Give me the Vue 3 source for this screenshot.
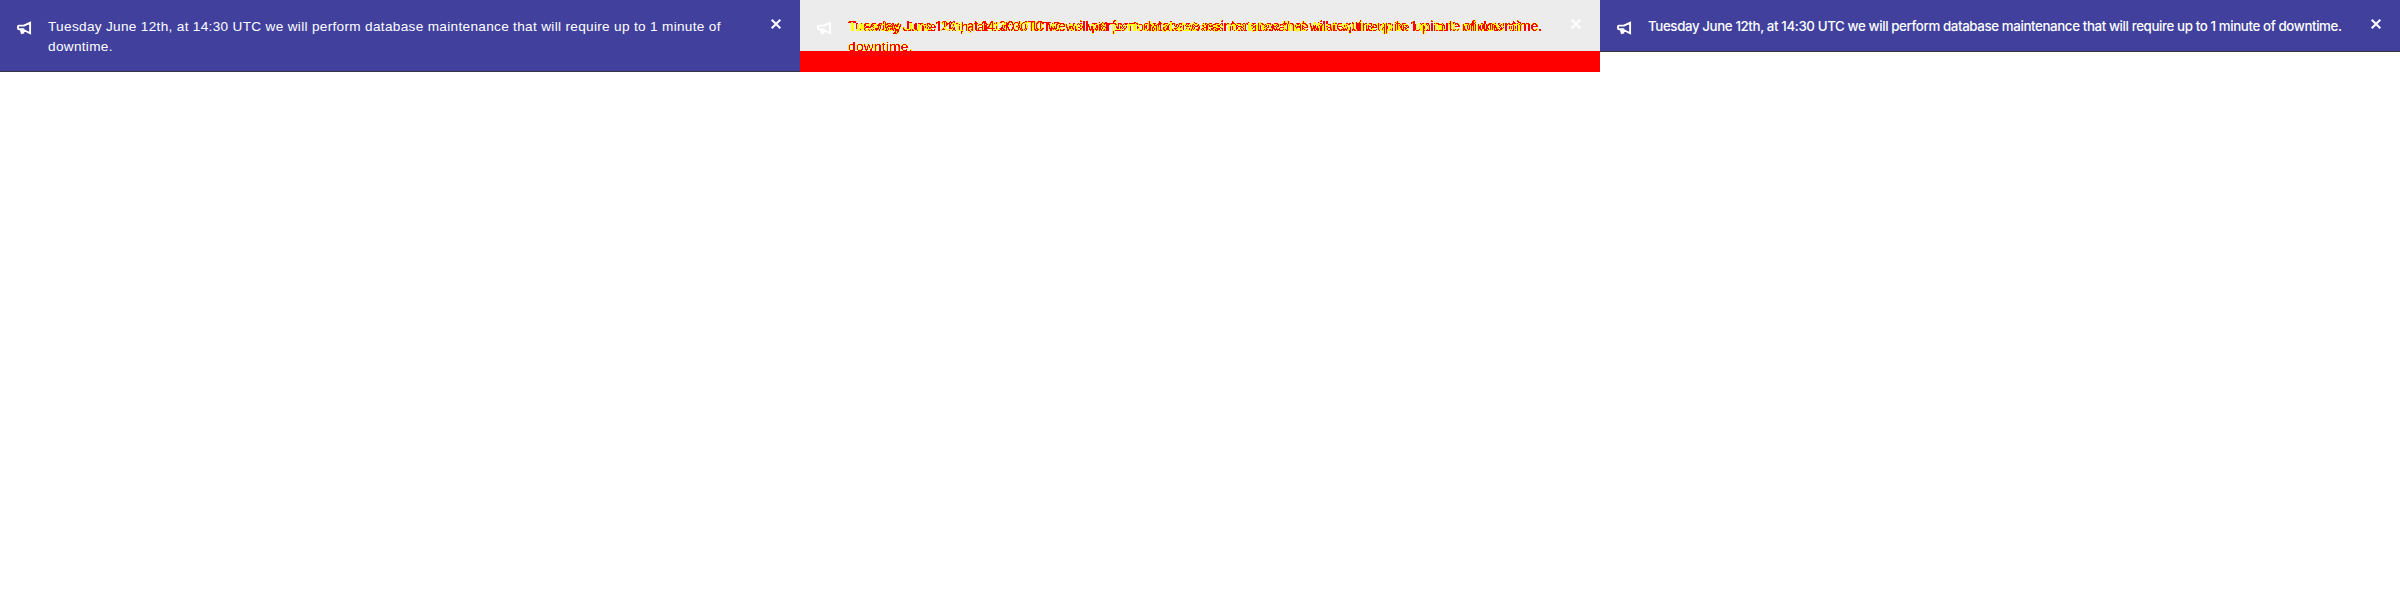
<script setup>
const message = 'Tuesday June 12th, at 14:30 UTC we will perform database maintenance that will require up to 1 minute of downtime.'
const panels = [
  { kind: 'before', texts: ['system'] },
  { kind: 'diff', texts: ['system', 'brand'] },
  { kind: 'after', texts: ['brand'] },
]
</script>

<template>
  <main class="comparison">
    <section v-for="panel in panels" :key="panel.kind" class="panel" :class="panel.kind">
      <div class="banner">
        <svg class="megaphone" viewBox="0 0 16 16" aria-hidden="true">
          <path d="M7.8 5.6 L14.1 2.8 V13.3 L7.8 10 M8.2 5.6 H3.2 Q1.9 5.6 1.9 6.9 V8 Q1.9 9.3 3.2 9.3 H8.2 M4.7 9.6 L6 13.9 M7 10 L7.4 13.6" />
        </svg>
        <div class="copy">
          <p v-for="font in panel.texts" :key="font" class="message" :class="font">{{ message }}</p>
        </div>
        <svg class="close" viewBox="0 0 12 12" aria-hidden="true"><path d="M1.7 1.7 L10.3 10.3 M10.3 1.7 L1.7 10.3" /></svg>
      </div>
      <div v-if="panel.kind === 'diff'" class="height-change"></div>
    </section>
    <!-- Strong differences become red, faint edge differences yellow. -->
    <svg class="filters" width="0" height="0" aria-hidden="true">
      <filter id="pixel-diff" x="0" y="0" width="1" height="1" color-interpolation-filters="sRGB">
        <feGaussianBlur in="SourceGraphic" stdDeviation="0.4" result="soft" />
        <feColorMatrix in="soft" type="matrix" values="0 0 0 0 1  0 0 0 0 1  0 0 0 0 0  40 0 0 0 -2" result="faint" />
        <feColorMatrix in="SourceGraphic" type="matrix" values="0 0 0 0 1  0 0 0 0 0  0 0 0 0 0  40 0 0 0 -22" result="strong" />
        <feMerge><feMergeNode in="faint" /><feMergeNode in="strong" /></feMerge>
      </filter>
    </svg>
  </main>
</template>

<style>
body { background: #fff; }
</style>

<style scoped>
.comparison { display: grid; grid-template-columns: repeat(3, 800px); align-items: start; width: 2400px; height: 600px; background: #fff; }
.filters { position: absolute; }
.banner { box-sizing: border-box; display: flex; align-items: flex-start; width: 800px; padding: 16px; border-bottom: 1px solid #343741; background: #41419d; color: #fff; }
.before .banner { height: 72px; }
.after .banner { height: 52px; }
.diff .banner { height: 51px; border: 0; background: #ececec; overflow: hidden; }
.height-change { height: 21px; background: #f00; }
.megaphone { flex: none; width: 16px; height: 16px; margin: 4px 16px 0 0; fill: none; stroke: #fff; stroke-width: 1.9; }
.copy { display: grid; width: 700px; }
.message { grid-area: 1 / 1; width: 700px; margin: 0; line-height: 20px; font-size: 14px; }
.system { padding-top: 1px; font-family: "Liberation Sans", Arial, sans-serif; font-size: 13.6px; letter-spacing: .32px; }
.brand { font-family: Inter, sans-serif; font-size: 13.3px; font-weight: 500; letter-spacing: -.385px; white-space: nowrap; }
.close { flex: none; width: 12px; height: 12px; margin: 2px 2px 0 auto; fill: none; stroke: #fff; stroke-width: 2; }
.diff .copy { isolation: isolate; background: #000; filter: url(#pixel-diff); }
.diff .message { mix-blend-mode: difference; }
</style>
